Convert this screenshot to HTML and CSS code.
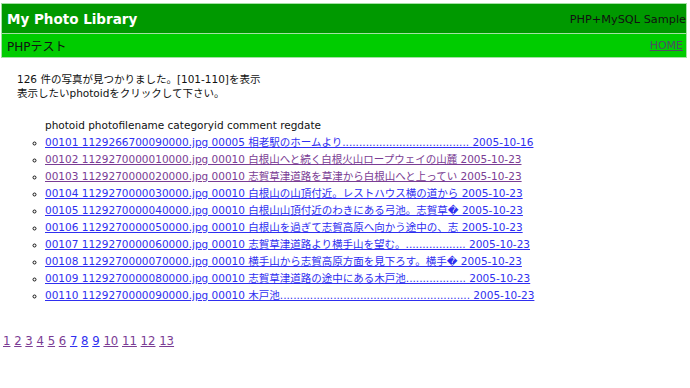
FILE: index.html
```html
<!DOCTYPE html>
<html>
<head>
    <meta charset="utf-8">
    <title>My Photo Library</title>
    <link rel="stylesheet" href="styles.css">
</head>
<body>
    <div class="header">
        <div class="title-bar">
            <span class="site-title">My Photo Library</span>
            <span class="site-sub">PHP+MySQL Sample</span>
        </div>
        <div class="nav-bar">
            <span class="page-name">PHPテスト</span>
            <a class="home-link" href="#">HOME</a>
        </div>
    </div>

    <div class="content">
        <p class="info">126 件の写真が見つかりました。[101-110]を表示<br>表示したいphotoidをクリックして下さい。</p>

        <ul class="photo-list">
            <li class="list-head">photoid photofilename categoryid comment regdate</li>
            <li><a href="#">00101 1129266700090000.jpg 00005 相老駅のホームより...................................... 2005-10-16</a></li>
            <li><a class="visited" href="#">00102 1129270000010000.jpg 00010 白根山へと続く白根火山ロープウェイの山麓 2005-10-23</a></li>
            <li><a class="visited" href="#">00103 1129270000020000.jpg 00010 志賀草津道路を草津から白根山へと上ってい 2005-10-23</a></li>
            <li><a href="#">00104 1129270000030000.jpg 00010 白根山の山頂付近。レストハウス横の道から 2005-10-23</a></li>
            <li><a href="#">00105 1129270000040000.jpg 00010 白根山山頂付近のわきにある弓池。志賀草� 2005-10-23</a></li>
            <li><a href="#">00106 1129270000050000.jpg 00010 白根山を過ぎて志賀高原へ向かう途中の、志 2005-10-23</a></li>
            <li><a href="#">00107 1129270000060000.jpg 00010 志賀草津道路より横手山を望む。.................. 2005-10-23</a></li>
            <li><a href="#">00108 1129270000070000.jpg 00010 横手山から志賀高原方面を見下ろす。横手� 2005-10-23</a></li>
            <li><a href="#">00109 1129270000080000.jpg 00010 志賀草津道路の途中にある木戸池.................. 2005-10-23</a></li>
            <li><a href="#">00110 1129270000090000.jpg 00010 木戸池......................................................... 2005-10-23</a></li>
        </ul>
    </div>

    <div class="pager">
        <a class="visited" href="#">1</a>
        <a class="visited" href="#">2</a>
        <a class="visited" href="#">3</a>
        <a class="visited" href="#">4</a>
        <a class="visited" href="#">5</a>
        <a class="visited" href="#">6</a>
        <a href="#">7</a>
        <a href="#">8</a>
        <a href="#">9</a>
        <a class="visited" href="#">10</a>
        <a class="visited" href="#">11</a>
        <a class="visited" href="#">12</a>
        <a class="visited" href="#">13</a>
    </div>
</body>
</html>
```

FILE: styles.css
```css
body {
    margin: 3px 3px 0 1px;
    font-family: "DejaVu Sans", "Noto Sans CJK JP", sans-serif;
    font-size: 10.5px;
    color: #111;
    background: #fff;
}
a {
    color: #2f2ff0;
}
a.visited {
    color: #7a3c94;
}
.header {
    border: 1px solid #a3e0a3;
}
.title-bar {
    height: 29px;
    background: #009900;
    border-bottom: 1px solid #a3e0a3;
    display: flex;
    justify-content: space-between;
    align-items: center;
    padding-left: 5px;
}
.site-title {
    color: #fff;
    font-weight: bold;
    font-size: 13.5px;
}
.site-sub {
    color: #111;
    font-size: 11.3px;
    padding-top: 2px;
}
.nav-bar {
    height: 23px;
    background: #00cc00;
    display: flex;
    justify-content: space-between;
    align-items: center;
    padding: 0 3px 0 5px;
}
.page-name {
    font-size: 12px;
    color: #111;
}
.home-link {
    font-size: 11px;
    color: #4e4e62;
}
.content {
    padding-left: 16px;
}
.info {
    margin: 14px 0 0;
    line-height: 14px;
}
.photo-list {
    margin: 17px 0 0;
    padding-left: 28px;
    list-style: circle;
}
.photo-list li {
    line-height: 17px;
    white-space: nowrap;
}
.photo-list li::marker {
    font-size: 9px;
}
.photo-list .list-head {
    list-style: none;
}
.pager {
    margin-top: 30px;
    padding-left: 2px;
    font-size: 11.7px;
    line-height: 15px;
}
```
